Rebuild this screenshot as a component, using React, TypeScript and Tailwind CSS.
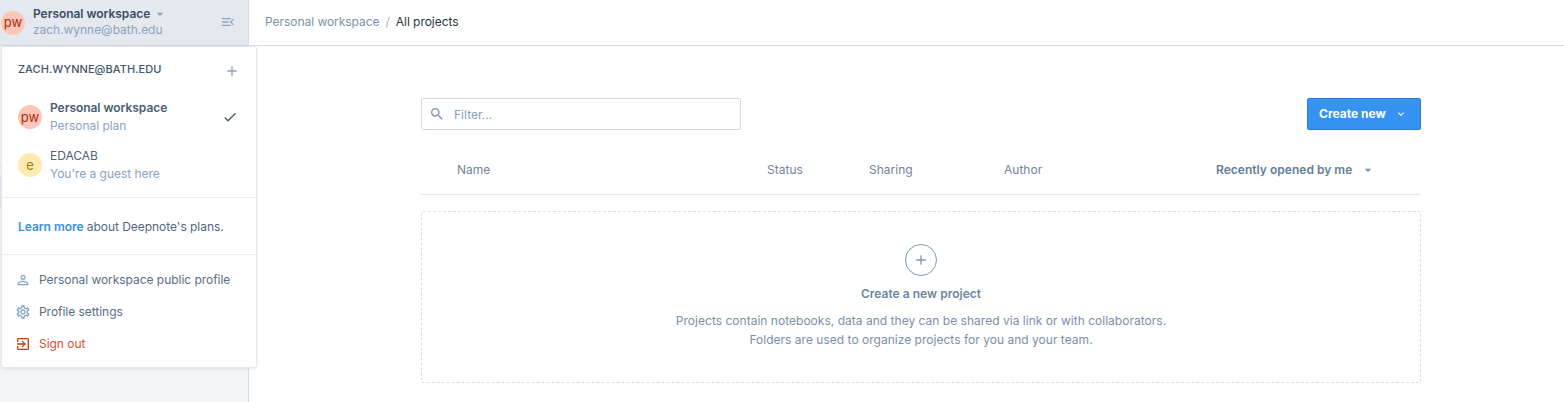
import React from "react";
import {
  MdAdd,
  MdArrowDropDown,
  MdCheck,
  MdExitToApp,
  MdExpandMore,
  MdMenuOpen,
  MdOutlineSettings,
  MdPersonOutline,
  MdSearch,
} from "react-icons/md";

type AvatarProps = { label: string; tone: "red" | "yellow" };

function Avatar({ label, tone }: AvatarProps) {
  const colors = tone === "red" ? "bg-[#ffc6b8] text-[#a82c0c]" : "bg-[#ffebb0] text-[#a07c10]";
  return (
    <span className={`flex size-6 shrink-0 items-center justify-center rounded-full text-[13px] leading-none font-normal ${colors}`}>
      {label}
    </span>
  );
}

function WorkspaceItem(props: AvatarProps & { name: string; note: string; selected?: boolean }) {
  return (
    <li className="flex h-12 items-center">
      <Avatar label={props.label} tone={props.tone} />
      <div className="ml-2 flex flex-1 flex-col leading-[18px]">
        <span className={props.selected ? "font-semibold text-[#4a5d73]" : "text-[#4f6175]"}>{props.name}</span>
        <span className="text-[#8ba3bd]">{props.note}</span>
      </div>
      {props.selected && <MdCheck className="mr-[2px] size-4 text-[#4a5d73]" />}
    </li>
  );
}

function WorkspaceMenu() {
  return (
    <div className="absolute top-[46px] left-px z-10 flex h-[322px] w-64 flex-col rounded-[3px] border border-[#e3e9f0] bg-white shadow-[0_1px_3px_rgba(60,80,110,0.12)]">
      <div className="flex h-[46px] items-center justify-between pr-4 pl-4">
        <span className="pb-px text-[11px] font-medium tracking-[0.06px] text-[#43566b]">ZACH.WYNNE@BATH.EDU</span>
        <MdAdd className="mt-[2px] size-4 text-[#8ba3bd]" />
      </div>
      <ul className="h-[104px] px-4">
        <WorkspaceItem label="pw" tone="red" name="Personal workspace" note="Personal plan" selected />
        <WorkspaceItem label="e" tone="yellow" name="EDACAB" note="You're a guest here" />
      </ul>
      <p className="flex h-[57px] items-center border-t border-[#e8edf3] px-4 pt-[2px] whitespace-pre text-[#53677d]">
        <a className="font-semibold text-[#3a8fe8]">Learn more</a> about Deepnote's plans.
      </p>
      <ul className="flex-1 border-t border-[#e8edf3] px-[13px] pt-[9px]">
        <li className="flex h-8 items-center gap-[8px] text-[#5a6e84]">
          <MdPersonOutline className="size-4 text-[#8ba3bd]" />
          Personal workspace public profile
        </li>
        <li className="flex h-8 items-center gap-[8px] text-[#5a6e84]">
          <MdOutlineSettings className="size-4 text-[#8ba3bd]" />
          Profile settings
        </li>
        <li className="flex h-8 items-center gap-[8px] text-[#d6522a]">
          <MdExitToApp className="size-4 text-[#d0410f]" />
          Sign out
        </li>
      </ul>
    </div>
  );
}

function Sidebar() {
  return (
    <aside className="relative flex w-[249px] shrink-0 flex-col border-r border-[#d3dde7] bg-[#f3f5f8] tracking-[-0.04px]">
      <div className="flex h-[46px] items-center border-b border-[#d3dde7] bg-[#e4e9f0] pl-px">
        <Avatar label="pw" tone="red" />
        <div className="ml-2 flex-1 pb-px leading-4">
          <div className="flex items-center font-semibold text-[#3b4d61]">
            Personal workspace
            <MdArrowDropDown className="ml-0.5 size-4 text-[#8ba3bd]" />
          </div>
          <div className="text-[#8ba3bd]">zach.wynne@bath.edu</div>
        </div>
        <MdMenuOpen className="mr-3 mb-px size-4 text-[#8ba3bd]" />
      </div>
      <div className="h-[121px] border-b border-[#d3dde7]" />
      <div className="mt-2 h-8 bg-[#e1e7ee]" />
      <WorkspaceMenu />
    </aside>
  );
}

export default function App() {
  return (
    <div className="flex h-[402px] w-[1564px] overflow-hidden bg-white font-['Inter',sans-serif] text-[12px] tracking-[0.02px]">
      <Sidebar />
      <main className="flex-1">
        <nav className="flex h-[46px] items-center border-b border-[#d3dde7] pb-[2px] pl-4 tracking-[-0.04px]">
          <span className="text-[#7c92ab]">Personal workspace</span>
          <span className="mx-[6px] text-[#a5b5c6]">/</span>
          <span className="text-[#2a3440]">All projects</span>
        </nav>
        <div className="ml-[172px] w-[1000px] pt-[52px]">
          <div className="flex h-8 justify-between">
            <label className="flex w-80 items-center rounded-[2px] border border-[#cfdae5] pl-[7px] text-[#86a0b8]">
              <MdSearch className="mr-[9px] size-4 text-[#7c95b0]" />
              <span className="pt-px">Filter...</span>
            </label>
            <button className="flex w-[114px] items-center rounded-[2px] border border-[#2a7bd4] bg-[#3793f1] pl-[11px] font-bold text-white">
              Create new
              <MdExpandMore className="ml-[9px] size-3" />
            </button>
          </div>
          <div className="flex h-[65px] items-center border-b border-[#e3e9f0] pt-[16px] pl-9 text-[#74849b]">
            <span className="w-[310px]">Name</span>
            <span className="w-[102px]">Status</span>
            <span className="w-[135px]">Sharing</span>
            <span className="w-[212px]">Author</span>
            <span className="flex items-center font-semibold text-[#647d97]">
              Recently opened by me
              <MdArrowDropDown className="ml-2 size-4 text-[#7c95b0]" />
            </span>
          </div>
          <section className="mt-4 flex h-[172px] flex-col items-center rounded-[2px] border border-dashed border-[#d8dfe6] pt-8 text-center">
            <span className="flex size-8 items-center justify-center rounded-full border border-[#7f99b3] text-[#7f99b3]">
              <MdAdd className="size-4" />
            </span>
            <h2 className="mt-2 leading-5 font-semibold text-[#6c86a1]">Create a new project</h2>
            <p className="mt-[7px] leading-[19px] text-[#7c90a9]">
              Projects contain notebooks, data and they can be shared via link or with collaborators.
              <br />
              Folders are used to organize projects for you and your team.
            </p>
          </section>
        </div>
      </main>
    </div>
  );
}
